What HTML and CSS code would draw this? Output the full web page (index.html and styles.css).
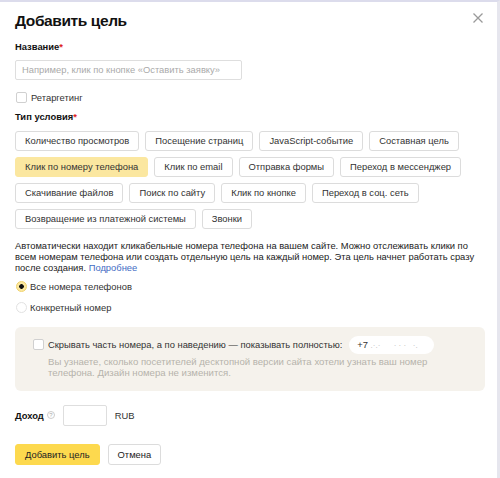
FILE: index.html
```html
<!DOCTYPE html>
<html lang="ru">
<head>
<meta charset="utf-8">
<link rel="stylesheet" href="styles.css">
</head>
<body>
<div class="modal">
  <div class="head">
    <h1 class="title">Добавить цель</h1>
    <span class="close">
      <svg width="10" height="10" viewBox="0 0 10 10"><path d="M0.5 0.5L9.5 9.5M9.5 0.5L0.5 9.5" stroke="#9a9a9a" stroke-width="1.3" fill="none"/></svg>
    </span>
  </div>
  <div class="label name-label">Название<span class="req">*</span></div>
  <div class="input name-input">Например, клик по кнопке «Оставить заявку»</div>
  <label class="check-row"><span class="checkbox"></span>Ретаргетинг</label>
  <div class="label type-label">Тип условия<span class="req">*</span></div>
  <div class="chips">
    <div class="chip-row">
      <span class="chip">Количество просмотров</span>
      <span class="chip">Посещение страниц</span>
      <span class="chip">JavaScript-событие</span>
      <span class="chip">Составная цель</span>
    </div>
    <div class="chip-row">
      <span class="chip chip-active">Клик по номеру телефона</span>
      <span class="chip">Клик по email</span>
      <span class="chip">Отправка формы</span>
      <span class="chip">Переход в мессенджер</span>
    </div>
    <div class="chip-row">
      <span class="chip">Скачивание файлов</span>
      <span class="chip">Поиск по сайту</span>
      <span class="chip">Клик по кнопке</span>
      <span class="chip">Переход в соц. сеть</span>
    </div>
    <div class="chip-row">
      <span class="chip">Возвращение из платежной системы</span>
      <span class="chip">Звонки</span>
    </div>
  </div>
  <div class="desc">
    <span class="line">Автоматически находит кликабельные номера телефона на вашем сайте. Можно отслеживать клики по</span>
    <span class="line">всем номерам телефона или создать отдельную цель на каждый номер. Эта цель начнет работать сразу</span>
    <span class="line"><span>после создания.</span> <a class="link">Подробнее</a></span>
  </div>
  <div class="radios">
    <label class="radio-row"><span class="radio radio-on"></span>Все номера телефонов</label>
    <label class="radio-row"><span class="radio"></span>Конкретный номер</label>
  </div>
  <div class="hint-box">
    <div class="hint-top">
      <span class="checkbox"></span>
      <span class="hint-title">Скрывать часть номера, а по наведению — показывать полностью:</span>
      <span class="phone">+7 <span class="blur">.·.·&nbsp;&nbsp;&nbsp;&nbsp;&nbsp;&nbsp;·&nbsp;·&nbsp;·&nbsp;&nbsp;&nbsp;·.</span></span>
    </div>
    <p class="hint-text">Вы узнаете, сколько посетителей десктопной версии сайта хотели узнать ваш номер телефона. Дизайн номера не изменится.</p>
  </div>
  <div class="income">
    <span class="income-label">Доход</span>
    <span class="help">?</span>
    <span class="input income-input"></span>
    <span class="cur">RUB</span>
  </div>
  <div class="actions">
    <span class="btn btn-primary">Добавить цель</span>
    <span class="btn">Отмена</span>
  </div>
</div>
</body>
</html>
```
FILE: styles.css
```css
* { box-sizing: border-box; }
html, body { margin: 0; padding: 0; background: #fff; }
body {
  font-family: "Liberation Sans", Arial, sans-serif;
  color: #222;
  font-size: 9.4px;
}
.modal {
  width: 500px;
  height: 478px;
  border-top: 2px solid #dcdcec;
  border-right: 3px solid #e6e6ee;
  padding: 0 0 0 15px;
  overflow: hidden;
}
.head {
  display: flex;
  justify-content: space-between;
  align-items: flex-start;
  padding-top: 9px;
  padding-right: 14px;
}
.title {
  margin: 0;
  font-size: 15.5px;
  font-weight: 700;
  letter-spacing: -0.4px;
  color: #111;
  line-height: 20px;
}
.close { display: flex; margin-top: 2px; }
.label {
  font-weight: 700;
  font-size: 9.4px;
  color: #111;
  line-height: 12px;
}
.name-label { margin-top: 10px; }
.req { color: #d22; }
.input {
  border: 1px solid #dedede;
  border-radius: 2px;
  background: #fff;
}
.name-input {
  width: 227px;
  height: 20px;
  margin-top: 7px;
  color: #aaa;
  line-height: 18px;
  padding-left: 6px;
  white-space: nowrap;
}
.check-row {
  display: flex;
  align-items: center;
  margin-top: 11px;
  height: 12px;
  color: #333;
}
.checkbox {
  width: 11px;
  height: 11px;
  border: 1px solid #d0d0d0;
  border-radius: 2px;
  background: #fff;
  margin-right: 4px;
  flex: none;
}
.check-row .checkbox { margin-left: 1px; }
.type-label { margin-top: 8px; }
.chips {
  display: flex;
  flex-direction: column;
  gap: 6px;
  margin-top: 8px;
}
.chip-row {
  display: flex;
  gap: 6px;
}
.chip {
  height: 20px;
  line-height: 18px;
  padding: 0 9px;
  border: 1px solid #dcdcdc;
  border-radius: 3px;
  color: #333;
  white-space: nowrap;
  background: #fff;
}
.chip-active {
  background: #fbe7a0;
  border-color: #fbe7a0;
}
.desc {
  margin-top: 11px;
  line-height: 11.2px;
  color: #222;
}
.line { display: block; white-space: nowrap; }
.link { color: #3f6cc4; }
.radios { margin-top: 2.5px; }
.radio-row {
  display: flex;
  align-items: center;
  height: 21px;
  color: #333;
}
.radio {
  width: 11px;
  height: 11px;
  border-radius: 50%;
  border: 1px solid #e2e2e2;
  background: #fff;
  margin-right: 3px;
  margin-left: 1px;
  flex: none;
}
.radio-on {
  border: 1px solid #f0d26a;
  background: radial-gradient(circle, #111 0 2px, #fbe7a0 2.6px);
}
.hint-box {
  margin-top: 8.5px;
  width: 470px;
  height: 64px;
  background: #f5f2ec;
  border-radius: 6px;
  padding: 9px 18px 0 18px;
}
.hint-top {
  display: flex;
  align-items: center;
  height: 18px;
  color: #333;
}
.hint-title { white-space: nowrap; }
.phone {
  margin-left: 7px;
  background: #fff;
  border-radius: 9px;
  height: 18px;
  line-height: 18px;
  padding: 0 8px;
  width: 85px;
  white-space: nowrap;
  overflow: hidden;
  color: #333;
  flex: none;
}
.blur { color: #bbb; font-size: 8px; }
.hint-text {
  margin: 2.5px 0 0 15px;
  font-size: 9.6px;
  line-height: 11px;
  color: #b5b2ab;
  width: 400px;
}
.income {
  display: flex;
  align-items: center;
  margin-top: 14px;
}
.income-label { font-weight: 700; color: #111; }
.help {
  width: 8px;
  height: 8px;
  border: 1px solid #ccc;
  border-radius: 50%;
  font-size: 6px;
  line-height: 7px;
  text-align: center;
  color: #aaa;
  margin-left: 3px;
}
.income-input {
  width: 44px;
  height: 21px;
  margin-left: 8px;
}
.cur { margin-left: 8px; color: #333; }
.actions {
  display: flex;
  gap: 8px;
  margin-top: 18px;
}
.btn {
  height: 21px;
  line-height: 19px;
  padding: 0 9px;
  border: 1px solid #dcdcdc;
  border-radius: 3px;
  color: #222;
  background: #fff;
}
.btn-primary {
  background: #fdd94e;
  border-color: #fdd94e;
}
```
